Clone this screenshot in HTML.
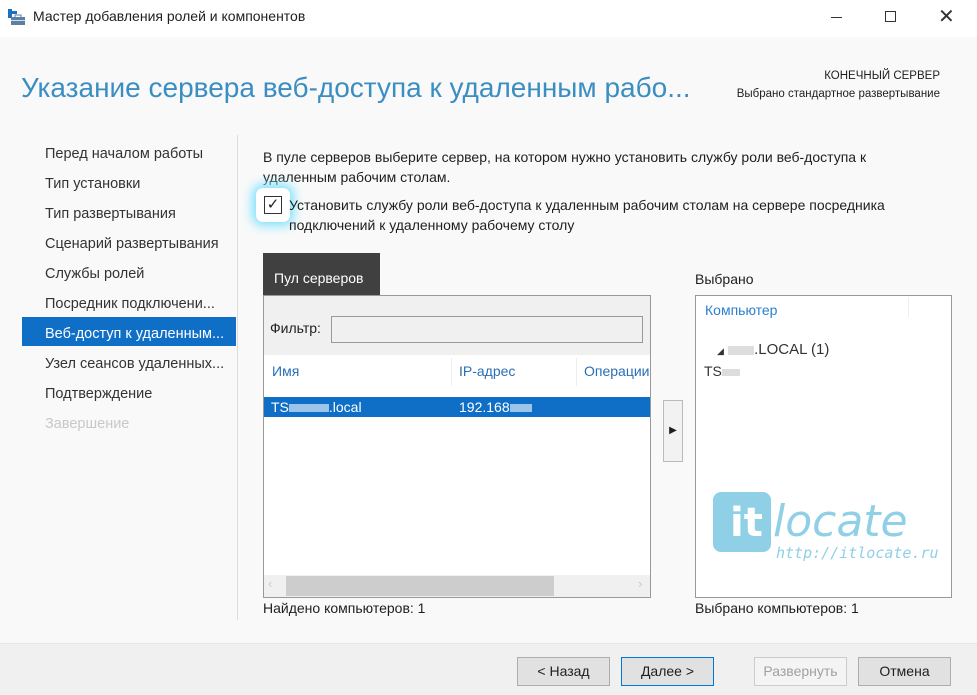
<!DOCTYPE html>
<html><head><meta charset="utf-8"><style>
*{margin:0;padding:0;box-sizing:border-box}
body{width:977px;height:695px;overflow:hidden;background:#f9f9f9;font-family:"Segoe UI","Liberation Sans","DejaVu Sans",sans-serif;font-size:14px;color:#1e1e1e;position:relative}
.a{position:absolute;white-space:nowrap}
.btn{position:absolute;top:657px;height:29px;width:93px;border:1px solid #adadad;background:#e1e1e1;text-align:center;line-height:27px;font-size:14px}
</style></head><body>
<div class="a" style="left:0;top:0;width:977px;height:37px;background:#fff"></div>
<svg class="a" style="left:8px;top:9px" width="18" height="17"><rect x="0" y="0" width="4" height="9" fill="#1f6fbf"/><rect x="0" y="2" width="9" height="3" fill="#1f6fbf"/><rect x="3" y="8" width="14" height="8" fill="#5d7fa3"/><rect x="7" y="6" width="6" height="3" fill="none" stroke="#5d7fa3"/><rect x="3" y="11" width="14" height="1" fill="#cfe0ee"/></svg>
<div class="a" style="left:33px;top:8px;font-size:14px">Мастер добавления ролей и компонентов</div>
<div class="a" style="left:831px;top:17px;width:11px;height:1px;background:#333"></div>
<div class="a" style="left:885px;top:11px;width:11px;height:11px;border:1px solid #333"></div>
<div class="a" style="left:938px;top:4px;font-size:20px;font-weight:300;color:#333">✕</div>
<div class="a" style="left:21px;top:72px;font-size:28px;color:#3b8ec2;font-weight:300">Указание сервера веб-доступа к удаленным рабо...</div>
<div class="a" style="right:37px;top:67px;font-size:11.5px;text-align:right;line-height:18px">КОНЕЧНЫЙ СЕРВЕР<br>Выбрано стандартное развертывание</div>
<div class="a" style="left:237px;top:135px;width:1px;height:485px;background:#ddd"></div>
<div class="a" style="left:22px;top:317px;width:214px;height:29px;background:#0f6fc6"></div>
<div class="a" style="left:45px;top:139px;line-height:30px;font-size:14.5px;color:#333">Перед началом работы<br>Тип установки<br>Тип развертывания<br>Сценарий развертывания<br>Службы ролей<br>Посредник подключени...<br><span style="color:#fff">Веб-доступ к удаленным...</span><br>Узел сеансов удаленных...<br>Подтверждение<br><span style="color:#c8c8c8">Завершение</span></div>
<div class="a" style="left:263px;top:147px;line-height:20px;font-size:14px">В пуле серверов выберите сервер, на котором нужно установить службу роли веб-доступа к<br>удаленным рабочим столам.</div>
<div class="a" style="left:256px;top:188px;width:34px;height:34px;border-radius:7px;background:#fff;box-shadow:0 0 10px 4px #7fe3ff"></div>
<div class="a" style="left:264px;top:196px;width:18px;height:18px;border:1px solid #333;background:#fff;font-size:15px;line-height:16px;text-align:center">✓</div>
<div class="a" style="left:289px;top:195px;line-height:20px;font-size:14px">Установить службу роли веб-доступа к удаленным рабочим столам на сервере посредника<br>подключений к удаленному рабочему столу</div>
<div class="a" style="left:263px;top:253px;width:117px;height:43px;background:#404040;color:#fff;line-height:50px;padding-left:11px;font-size:14px">Пул серверов</div>
<div class="a" style="left:263px;top:295px;width:388px;height:303px;border:1px solid #999;background:#fff"></div>
<div class="a" style="left:264px;top:296px;width:386px;height:59px;background:#f0f0f0"></div>
<div class="a" style="left:270px;top:320px">Фильтр:</div>
<div class="a" style="left:331px;top:316px;width:312px;height:27px;border:1px solid #999;background:#f0f0f0"></div>
<div class="a" style="left:451px;top:358px;width:1px;height:28px;background:#eee"></div>
<div class="a" style="left:576px;top:358px;width:1px;height:28px;background:#eee"></div>
<div class="a" style="left:272px;top:363px;color:#2a6fb5">Имя</div>
<div class="a" style="left:459px;top:363px;color:#2a6fb5">IP-адрес</div>
<div class="a" style="left:584px;top:363px;color:#2a6fb5;width:66px;overflow:hidden">Операции</div>
<div class="a" style="left:264px;top:397px;width:386px;height:20px;background:#0f6fc6;color:#fff;line-height:20px"><span style="position:absolute;left:7px">TS<span style="display:inline-block;width:40px;height:8px;background:#9cc3e8;vertical-align:middle"></span>.local</span><span style="position:absolute;left:195px">192.168<span style="display:inline-block;width:22px;height:8px;background:#9cc3e8;vertical-align:middle"></span></span></div>
<div class="a" style="left:264px;top:575px;width:386px;height:22px;background:#f0f0f0"></div>
<div class="a" style="left:286px;top:576px;width:268px;height:20px;background:#cdcdcd"></div>
<div class="a" style="left:268px;top:576px;color:#ccc;font-size:13px">‹</div>
<div class="a" style="left:638px;top:576px;color:#ccc;font-size:13px">›</div>
<div class="a" style="left:663px;top:400px;width:20px;height:62px;border:1px solid #bbb;background:#f2f2f2;font-size:10px;line-height:60px;text-align:center">▶</div>
<div class="a" style="left:263px;top:600px">Найдено компьютеров: 1</div>
<div class="a" style="left:695px;top:271px">Выбрано</div>
<div class="a" style="left:695px;top:295px;width:257px;height:303px;border:1px solid #999;background:#fff"></div>
<div class="a" style="left:908px;top:297px;width:1px;height:20px;background:#eee"></div>
<div class="a" style="left:705px;top:302px;color:#2a7fd0">Компьютер</div>
<div class="a" style="left:717px;top:341px;font-size:15px;color:#333"><span style="font-size:9px">◢</span> <span style="display:inline-block;width:26px;height:9px;background:#ddd;vertical-align:middle"></span>.LOCAL (1)</div>
<div class="a" style="left:704px;top:363px;color:#333">TS<span style="display:inline-block;width:18px;height:7px;background:#ddd;vertical-align:middle"></span></div>
<div class="a" style="left:713px;top:492px;width:58px;height:60px;background:#8fd0e6;border-radius:8px"></div>
<div class="a" style="left:730px;top:500px;font-size:40px;color:#fff;font-weight:bold;font-family:'DejaVu Sans',sans-serif">it</div>
<div class="a" style="left:773px;top:496px;font-size:44px;color:#8fd0e6;font-style:italic;font-family:'DejaVu Sans',sans-serif;font-weight:300">locate</div>
<div class="a" style="left:776px;top:544px;font-size:15px;color:#8fd0e6;font-style:italic;font-family:'DejaVu Sans Mono',monospace">http://itlocate.ru</div>
<div class="a" style="left:695px;top:600px">Выбрано компьютеров: 1</div>
<div class="a" style="left:0;top:643px;width:977px;height:52px;background:#f0f0f0;border-top:1px solid #e6e6e6"></div>
<div class="btn" style="left:517px">&lt; Назад</div>
<div class="btn" style="left:621px;border-color:#0078d7">Далее &gt;</div>
<div class="btn" style="left:754px;background:#f4f4f4;border-color:#ccc;color:#a0a0a0">Развернуть</div>
<div class="btn" style="left:858px">Отмена</div>
</body></html>
